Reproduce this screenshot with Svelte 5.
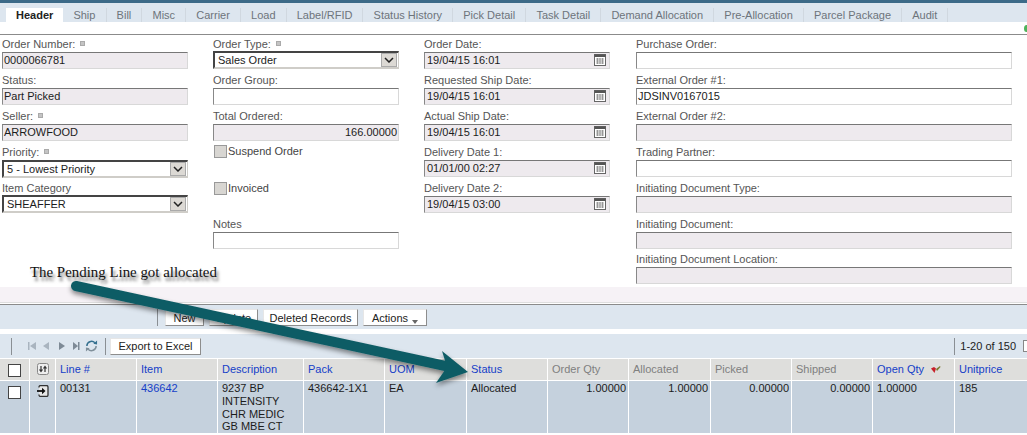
<script lang="ts">
	type Field = {
		label: string;
		value?: string;
		kind?: 'text' | 'off' | 'select' | 'date' | 'check' | 'blank';
		pin?: boolean;
		right?: boolean;
		tight?: boolean;
	};

	const tabs = ['Header', 'Ship', 'Bill', 'Misc', 'Carrier', 'Load', 'Label/RFID', 'Status History', 'Pick Detail', 'Task Detail', 'Demand Allocation', 'Pre-Allocation', 'Parcel Package', 'Audit'];

	const columns: Field[][] = [
		[
			{ label: 'Order Number:', value: '0000066781', kind: 'off', pin: true },
			{ label: 'Status:', value: 'Part Picked', kind: 'off' },
			{ label: 'Seller:', value: 'ARROWFOOD', kind: 'off', pin: true },
			{ label: 'Priority:', value: '5 - Lowest Priority', kind: 'select', pin: true },
			{ label: 'Item Category', value: 'SHEAFFER', kind: 'select', tight: true }
		],
		[
			{ label: 'Order Type:', value: 'Sales Order', kind: 'select', pin: true },
			{ label: 'Order Group:', value: '', kind: 'text' },
			{ label: 'Total Ordered:', value: '166.00000', kind: 'off', right: true },
			{ label: 'Suspend Order', kind: 'check' },
			{ label: 'Invoiced', kind: 'check' },
			{ label: 'Notes', value: '', kind: 'text' }
		],
		[
			{ label: 'Order Date:', value: '19/04/15 16:01', kind: 'date' },
			{ label: 'Requested Ship Date:', value: '19/04/15 16:01', kind: 'date' },
			{ label: 'Actual Ship Date:', value: '19/04/15 16:01', kind: 'date' },
			{ label: 'Delivery Date 1:', value: '01/01/00 02:27', kind: 'date' },
			{ label: 'Delivery Date 2:', value: '19/04/15 03:00', kind: 'date' }
		],
		[
			{ label: 'Purchase Order:', value: '', kind: 'text' },
			{ label: 'External Order #1:', value: 'JDSINV0167015', kind: 'text' },
			{ label: 'External Order #2:', value: '', kind: 'off' },
			{ label: 'Trading Partner:', value: '', kind: 'text' },
			{ label: 'Initiating Document Type:', value: '', kind: 'off' },
			{ label: 'Initiating Document:', value: '', kind: 'off' },
			{ label: 'Initiating Document Location:', value: '', kind: 'off' }
		]
	];

	const gridCols = [
		{ name: 'Line #', width: 81, link: true },
		{ name: 'Item', width: 81, link: true },
		{ name: 'Description', width: 86, link: true },
		{ name: 'Pack', width: 81, link: true },
		{ name: 'UOM', width: 82, link: true },
		{ name: 'Status', width: 81, link: true },
		{ name: 'Order Qty', width: 81 },
		{ name: 'Allocated', width: 82 },
		{ name: 'Picked', width: 81 },
		{ name: 'Shipped', width: 81 },
		{ name: 'Open Qty', width: 82, link: true, sort: true },
		{ name: 'Unitprice', width: 72, link: true }
	];

	const rowCells = [
		{ text: '00131' },
		{ text: '436642', link: true },
		{ text: '9237 BP INTENSITY CHR MEDIC GB MBE CT' },
		{ text: '436642-1X1' },
		{ text: 'EA' },
		{ text: 'Allocated' },
		{ text: '1.00000', right: true },
		{ text: '1.00000', right: true },
		{ text: '0.00000', right: true },
		{ text: '0.00000', right: true },
		{ text: '1.00000' },
		{ text: '185' }
	];
</script>

<div class="page">
	<div class="topbar"></div>
	<nav class="tabs">
		{#each tabs as tab, i}
			<span class="tab" class:active={i === 0}>{tab}</span>
		{/each}
	</nav>
	<div class="status-strip"><span class="led"></span></div>

	<section class="form">
		{#each columns as col}
			<div class="col">
				{#each col as f}
					<div class="cell" class:tight={f.tight}>
						{#if f.kind === 'check'}
							<label class="check"><span class="box"></span>{f.label}</label>
						{:else}
							<div class="label">
								{f.label}
								{#if f.pin}<span class="pin"></span>{/if}
							</div>
							{#if f.kind === 'select'}
								<div class="select">
									<span>{f.value}</span>
									<span class="drop">
										<svg width="10" height="6" viewBox="0 0 10 6"><path d="M1 1l4 4 4-4" fill="none" stroke="#222" stroke-width="1.5" /></svg>
									</span>
								</div>
							{:else}
								<div class="input {f.kind}" class:right={f.right}>
									<span>{f.value}</span>
									{#if f.kind === 'date'}
										<svg class="cal" width="12" height="12" viewBox="0 0 12 12">
											<rect x="0.5" y="0.5" width="11" height="11" fill="#fff" stroke="#666" />
											<rect x="0.5" y="0.5" width="11" height="2.5" fill="#555" />
											<path d="M2 5h8M2 7h8M2 9h8M3.5 4v6M6 4v6M8.5 4v6" stroke="#888" stroke-width="0.8" />
										</svg>
									{/if}
								</div>
							{/if}
						{/if}
					</div>
				{/each}
			</div>
		{/each}
	</section>

	<div class="note">The Pending Line got allocated</div>

	<div class="pink"></div>

	<div class="toolbar actions">
		<span class="sep"></span>
		<button class="new">New</button>
		<button class="update">Update</button>
		<button class="deleted">Deleted Records</button>
		<button class="menu">Actions <i class="caret"></i></button>
	</div>

	<div class="toolbar pager">
		<span class="sep first"></span>
		<svg class="nav" width="58" height="14" viewBox="0 0 58 14">
			<g fill="#a9b4bf">
				<path d="M0 3h1.500v8H0zM8 3v8L2 7z" />
				<path d="M21 3v8l-6-4z" />
			</g>
			<g fill="#7e8a96">
				<path d="M31 3v8l6-4z" />
				<path d="M45 3v8l5-4zM50 3h1.500v8H50z" />
			</g>
		</svg>
		<svg class="refresh" width="13" height="14" viewBox="0 0 14 14" fill="none">
			<path d="M2 7a5 5 0 0 1 8.600-3.400" stroke="#35708f" stroke-width="1.600" />
			<path d="M12 7a5 5 0 0 1-8.600 3.400" stroke="#7f8f9a" stroke-width="1.600" />
			<path d="M9 4.500L13 1v4.500z" fill="#35708f" />
			<path d="M5 9.500L1 13V8.500z" fill="#7f8f9a" />
		</svg>
		<span class="sep"></span>
		<button class="export">Export to Excel</button>
		<span class="spacer"></span>
		<span class="sep"></span>
		<span class="count">1-20 of 150</span>
		<span class="next"></span>
	</div>

	<div class="grid">
		<div class="row head">
			<div class="c sel"><span class="cb"></span></div>
			<div class="c act">
				<svg width="12" height="12" viewBox="0 0 12 12">
					<rect x="0.5" y="0.5" width="11" height="11" rx="2" fill="#eee" stroke="#888" />
					<path d="M4 3v5M2.500 6.500L4 8.500l1.500-2M8 9V4M6.500 5.500L8 3.500l1.500 2" fill="none" stroke="#333" stroke-width="1.200" />
				</svg>
			</div>
			{#each gridCols as col}
				<div class="c" class:link={col.link} class:muted={!col.link} style="width: {col.width}px">
					{col.name}
					{#if col.sort}
						<svg class="sort" width="11" height="9" viewBox="0 0 11 9">
							<path d="M1 3.500L4 2l2 1.500L4.500 8z" fill="#c8202a" />
							<path d="M6 4L10 1l.5 1-3.500 4z" fill="#7c7a30" />
						</svg>
					{/if}
				</div>
			{/each}
		</div>
		<div class="row body">
			<div class="c sel"><span class="cb"></span></div>
			<div class="c act">
				<svg width="13" height="12" viewBox="0 0 13 12">
					<path d="M3 2.500V2a1.500 1.500 0 0 1 1.500-1.500h6A1.500 1.500 0 0 1 12 2v8a1.500 1.500 0 0 1-1.500 1.500h-6A1.500 1.500 0 0 1 3 10v-.5" fill="#e8e8e8" stroke="#333" stroke-width="1.300" />
					<path d="M1 6h5.500" stroke="#111" stroke-width="1.800" />
					<path d="M6 2.800L9.500 6 6 9.200z" fill="#111" />
				</svg>
			</div>
			{#each rowCells as cell, i}
				<div class="c" class:link={cell.link} class:num={cell.right} style="width: {gridCols[i].width}px">{cell.text}</div>
			{/each}
		</div>
	</div>

	<!-- annotation pasted over the screenshot -->
	<svg class="arrow" width="1027" height="435" viewBox="0 0 1027 435">
		<defs>
			<filter id="soft" x="-10%" y="-30%" width="120%" height="170%">
				<feDropShadow dx="0" dy="3" stdDeviation="2.500" flood-color="#000" flood-opacity="0.45" />
			</filter>
		</defs>
		<g filter="url(#soft)">
			<path d="M76 286L450 367" stroke="#115c65" stroke-width="10" stroke-linecap="round" fill="none" />
			<path d="M442 351L468 372 436 383 447 367z" fill="#115c65" />
		</g>
	</svg>
</div>

<style>
	:global(body) {
		margin: 0;
		background: #fff;
	}

	.page {
		position: relative;
		width: 1027px;
		height: 435px;
		overflow: hidden;
		font-family: 'Liberation Sans', Arial, sans-serif;
		font-size: 11px;
		color: #222;
	}

	.topbar {
		height: 3px;
		background: #3c6a88;
	}

	.tabs {
		display: flex;
		align-items: flex-end;
		height: 19px;
		padding-left: 6px;
		background: #dde6ef;
	}

	.tab {
		height: 14px;
		line-height: 14px;
		padding: 0 10.100px;
		color: #6d747b;
		border-right: 1px solid #d0d8e0;
	}

	.tab.active {
		padding: 0 10px;
		font-weight: bold;
		color: #222;
		background: #fff;
		border-right: 0;
	}

	.status-strip {
		position: relative;
		height: 12px;
		border-bottom: 1px solid #8b8b8b;
		box-sizing: content-box;
	}

	.led {
		position: absolute;
		right: -2px;
		top: 3px;
		width: 5px;
		height: 7px;
		border-radius: 50%;
		background: #4fb35a;
	}

	.form {
		display: grid;
		grid-template-columns: 211px 211px 212px 391px;
		height: 252px;
		padding-left: 2px;
		box-sizing: border-box;
	}

	.col {
		display: flex;
		flex-direction: column;
	}

	.cell {
		height: 36px;
		padding-top: 1px;
		box-sizing: border-box;
		width: fit-content;
		min-width: 186px;
	}

	.col:last-child .cell {
		width: 376px;
	}

	.col:last-child .cell:last-child {
		margin-top: -1px;
	}

	.label {
		height: 15px;
		line-height: 15px;
		color: #555;
		white-space: nowrap;
		padding-top: 1px;
	}

	.pin {
		display: inline-block;
		width: 5px;
		height: 5px;
		margin-left: 2px;
		vertical-align: 2px;
		background: #c4c4c4;
		border: 1px solid #aaa;
		box-sizing: border-box;
	}

	.input {
		display: flex;
		align-items: center;
		justify-content: space-between;
		height: 17px;
		padding: 0 3px 1px 1px;
		box-sizing: border-box;
		background: #fff;
		border: 1px solid #d8d8d8;
		border-top-color: #777;
		border-left-color: #888;
		color: #1c1c1c;
	}

	.input.off,
	.input.date {
		background: #eeeaee;
	}

	.input.date {
		padding-left: 2px;
	}

	.input.right {
		justify-content: flex-end;
		padding-right: 1px;
	}

	.select {
		display: flex;
		align-items: center;
		justify-content: space-between;
		height: 18px;
		padding-left: 3px;
		box-sizing: border-box;
		background: #fff;
		border: 2px solid #cfcdc8;
		border-top-color: #444;
		border-left-color: #444;
		border-right-width: 1px;
		color: #1c1c1c;
	}

	.cell:first-child .select {
		margin-top: -1px;
	}

	.tight .label {
		height: 14px;
		line-height: 14px;
	}

	.drop {
		display: flex;
		align-items: center;
		justify-content: center;
		width: 16px;
		height: 14px;
		margin-right: 1px;
		background: #dcd9d4;
		border: 1px solid #aaa;
		box-sizing: border-box;
	}

	.check {
		display: flex;
		align-items: center;
		gap: 1px;
		height: 14px;
		color: #444;
	}

	.cell:nth-child(5) .check {
		margin-top: 1px;
	}

	.box {
		width: 13px;
		height: 13px;
		box-sizing: border-box;
		margin-left: 1px;
		background: #d8d6d2;
		border: 1px solid #999;
	}

	.note {
		position: absolute;
		left: 30px;
		top: 264px;
		font-family: 'Liberation Serif', 'Times New Roman', serif;
		font-size: 14.900px;
		line-height: 17px;
		color: #111;
		text-shadow: 2px 4px 3px rgba(0, 0, 0, 0.55);
	}

	.pink {
		height: 15px;
		background: #f6f2f6;
		border-bottom: 1px solid #dedede;
	}

	.toolbar {
		display: flex;
		align-items: center;
		background: #dde6ef;
	}

	.actions {
		height: 23px;
		margin-top: 1px;
		padding-top: 1px;
		border-top: 1px solid #8b8b8b;
		box-sizing: content-box;
		padding-left: 157px;
		gap: 5px;
	}

	.sep {
		width: 1px;
		height: 17px;
		background: #8a8f94;
	}

	button {
		height: 17px;
		padding: 0;
		font: inherit;
		color: #222;
		background: #fff;
		border: 1px solid #e6e6e6;
		border-right-color: #8d8d8d;
		border-bottom-color: #8d8d8d;
	}

	.new {
		width: 39px;
		margin-left: 2px;
	}

	.update {
		width: 49px;
	}

	.deleted {
		width: 95px;
	}

	.menu {
		width: 64px;
	}

	.caret {
		display: inline-block;
		margin-left: 1px;
		vertical-align: -2px;
		border: 3px solid transparent;
		border-top: 4px solid #666;
		border-bottom: 0;
	}

	.pager {
		height: 24px;
		margin-top: 5px;
		padding-left: 11px;
	}

	.nav {
		margin-left: 16px;
	}

	.refresh {
		margin-left: -1px;
	}

	.pager .sep:not(.first) {
		margin-left: 7px;
	}

	.export {
		width: 91px;
		margin-left: 4px;
	}

	.spacer {
		flex: 1;
	}

	.count {
		margin-left: 5px;
		color: #222;
		font-size: 11px;
	}

	.next {
		width: 8px;
		height: 10px;
		margin-left: 7px;
		margin-right: -6px;
		background: #fff;
		border: 1px solid #888;
	}

	.grid {
		display: flex;
		flex-direction: column;
		gap: 1px;
		border-top: 1px solid #fff;
	}

	.row {
		display: flex;
	}

	.head {
		height: 21px;
		background: #dededc;
	}

	.body {
		height: 52px;
		background: #c5d1dd;
	}

	.c {
		box-sizing: border-box;
		flex: none;
		padding: 0 2px 0 4px;
		border-right: 1px solid #fff;
		line-height: 12.800px;
		color: #1c1c1c;
	}

	.head .c {
		display: flex;
		align-items: center;
	}

	.body .c {
		padding-top: 1px;
	}

	.c:last-child {
		border-right: 0;
	}

	.sel {
		width: 30px;
		display: flex;
		justify-content: center;
		padding: 0;
		padding-top: 5px !important;
	}

	.head .sel {
		align-items: flex-start;
	}

	.cb {
		display: block;
		width: 13px;
		height: 13px;
		box-sizing: border-box;
		background: #fff;
		border: 1px solid #444;
	}

	.act {
		width: 26px;
		display: flex;
		justify-content: center;
		padding: 0;
		padding-top: 4px !important;
	}

	.head .act {
		align-items: flex-start;
		padding-top: 4px;
	}

	.link {
		color: #1540c8;
	}

	.muted {
		color: #808080;
	}

	.num {
		text-align: right;
	}

	.sort {
		margin-left: 6px;
	}

	.arrow {
		position: absolute;
		left: 0;
		top: 0;
		pointer-events: none;
	}
</style>
